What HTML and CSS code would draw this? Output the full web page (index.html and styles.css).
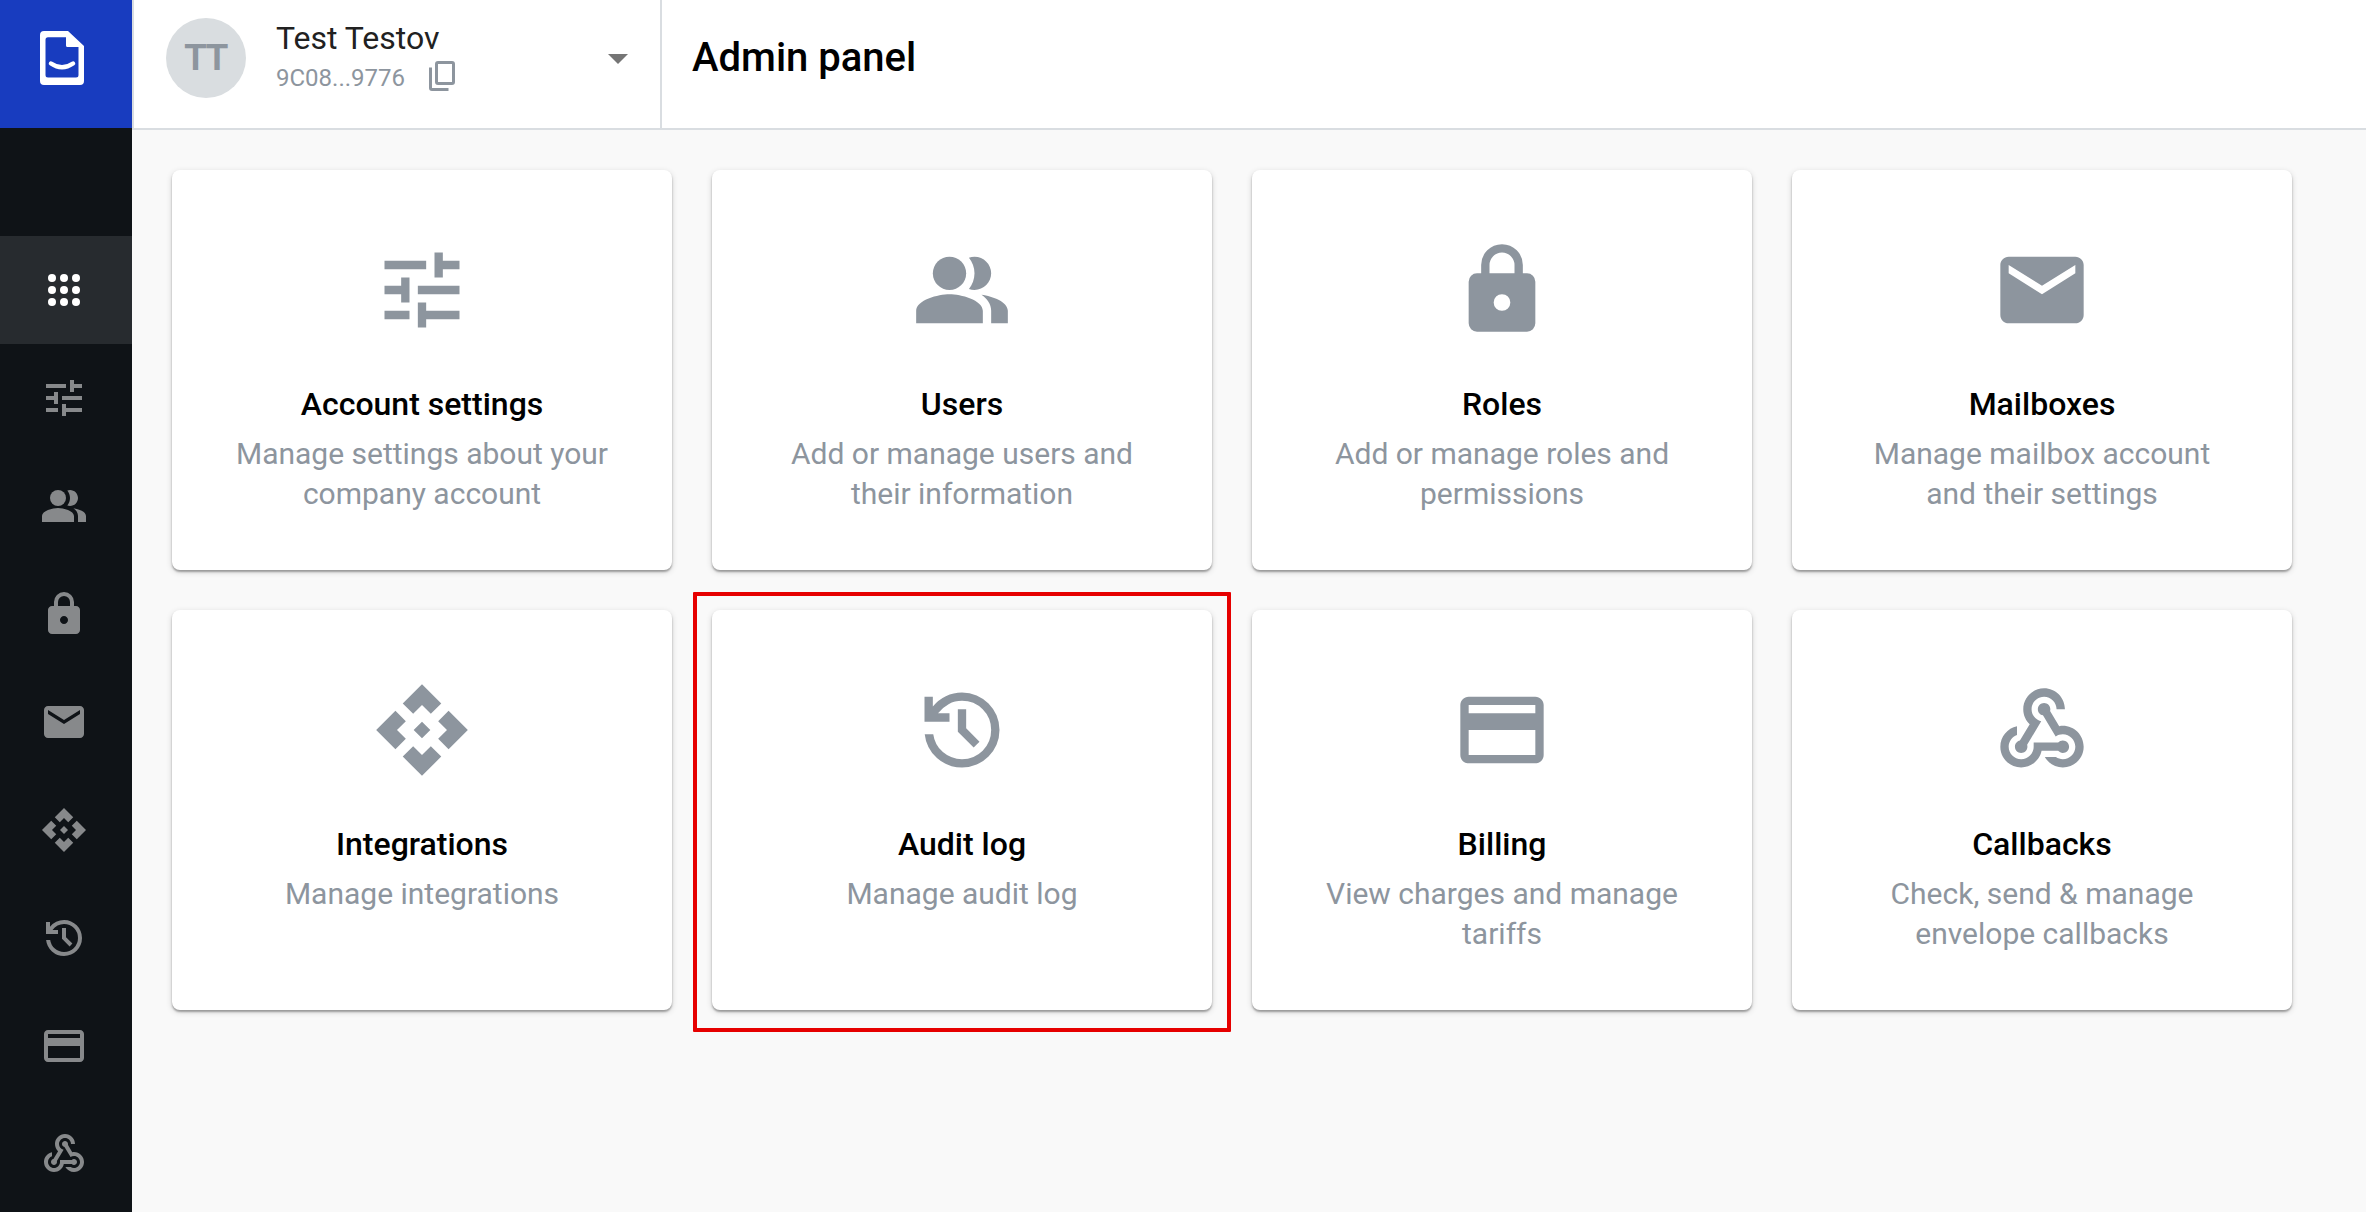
FILE: index.html
```html
<!DOCTYPE html>
<html lang="en">
<head>
<meta charset="utf-8">
<title>Admin panel</title>
<link rel="stylesheet" href="styles.css">
</head>
<body>
<svg class="sprite" xmlns="http://www.w3.org/2000/svg">
  <symbol id="apps" viewBox="0 0 24 24"><circle cx="6" cy="6" r="2"/><circle cx="12" cy="6" r="2"/><circle cx="18" cy="6" r="2"/><circle cx="6" cy="12" r="2"/><circle cx="12" cy="12" r="2"/><circle cx="18" cy="12" r="2"/><circle cx="6" cy="18" r="2"/><circle cx="12" cy="18" r="2"/><circle cx="18" cy="18" r="2"/></symbol>
  <symbol id="tune" viewBox="0 0 24 24"><path d="M3 17v2h6v-2H3zM3 5v2h10V5H3zm10 16v-2h8v-2h-8v-2h-2v6h2zM7 9v2H3v2h4v2h2V9H7zm14 4v-2H11v2h10zm-6-4h2V7h4V5h-4V3h-2v6z"/></symbol>
  <symbol id="people" viewBox="0 0 24 24"><circle cx="9" cy="8" r="4"/><path d="M16.67 13.13C18.04 14.06 19 15.32 19 17v3h4v-3c0-2.18-3.57-3.47-6.33-3.87zM15 12c2.21 0 4-1.79 4-4s-1.79-4-4-4c-.47 0-.91.1-1.33.24C14.5 5.27 15 6.58 15 8s-.5 2.73-1.33 3.76c.42.14.86.24 1.33.24zM9 13c-2.67 0-8 1.34-8 4v3h16v-3c0-2.66-5.33-4-8-4z"/></symbol>
  <symbol id="lock" viewBox="0 0 24 24"><path d="M6 22q-.825 0-1.413-.587T4 20V10q0-.825.588-1.413T6 8h1V6q0-2.075 1.463-3.537T12 1t3.538 1.463T17 6v2h1q.825 0 1.413.588T20 10v10q0 .825-.587 1.413T18 22zm6-5q.825 0 1.413-.587T14 15t-.587-1.412T12 13t-1.412.588T10 15t.588 1.413T12 17M9 8h6V6q0-1.25-.875-2.125T12 3t-2.125.875T9 6z"/></symbol>
  <symbol id="mail" viewBox="0 0 24 24"><path d="M20 4H4c-1.1 0-2 .9-2 2v12c0 1.1.9 2 2 2h16c1.1 0 2-.9 2-2V6c0-1.1-.9-2-2-2zm0 4l-8 5-8-5V6l8 5 8-5v2z"/></symbol>
  <symbol id="api" viewBox="0 0 24 24"><path d="M14 12l-2 2-2-2 2-2 2 2zm-2-6l2.12 2.12 2.5-2.5L12 1 7.38 5.62l2.5 2.5L12 6zm-6 6l2.12-2.12-2.5-2.5L1 12l4.62 4.62 2.5-2.5L6 12zm12 0l-2.12 2.12 2.5 2.5L23 12l-4.62-4.62-2.5 2.5L18 12zm-6 6l-2.12-2.12-2.5 2.5L12 23l4.62-4.62-2.5-2.5L12 18z"/></symbol>
  <symbol id="history" viewBox="0 0 24 24"><path d="M12 21q-3.45 0-6.012-2.287T3.05 13H5.1q.35 2.6 2.313 4.3T12 19q2.925 0 4.963-2.037T19 12t-2.037-4.963T12 5q-1.725 0-3.225.8T6.25 8H9v2H3V4h2v2.35q1.275-1.6 3.113-2.475T12 3q1.875 0 3.513.713t2.85 1.924 1.925 2.85T21 12t-.712 3.513-1.925 2.85-2.85 1.925T12 21m2.8-4.8L11 12.4V7h2v4.6l3.2 3.2z"/></symbol>
  <symbol id="card" viewBox="0 0 24 24"><path d="M20 4H4c-1.11 0-2 .89-2 2v12c0 1.11.89 2 2 2h16c1.1 0 2-.9 2-2V6c0-1.11-.9-2-2-2zm0 14H4v-6h16zm0-10H4V6h16z"/></symbol>
  <symbol id="webhook" viewBox="0 0 24 24"><path d="M10,15l5.88,0c0.27-0.31,0.67-0.5,1.12-0.5c0.83,0,1.5,0.67,1.5,1.5c0,0.83-0.67,1.5-1.5,1.5c-0.44,0-0.84-0.19-1.12-0.5l-3.98,0c-0.46,2.28-2.48,4-4.9,4c-2.76,0-5-2.24-5-5c0-2.42,1.72-4.44,4-4.9l0,2.07C4.84,13.58,4,14.7,4,16c0,1.65,1.35,3,3,3s3-1.35,3-3V15z M12.5,4c1.65,0,3,1.35,3,3h2c0-2.76-2.24-5-5-5l0,0c-2.76,0-5,2.24-5,5c0,1.43,0.6,2.71,1.55,3.62l-2.35,3.9C6.02,14.66,5.5,15.27,5.5,16c0,0.83,0.67,1.5,1.5,1.5s1.5-0.67,1.5-1.5c0-0.16-0.02-0.31-0.07-0.45l3.38-5.63C10.49,9.61,9.5,8.42,9.5,7C9.5,5.35,10.85,4,12.5,4z M17,13c-0.64,0-1.23,0.2-1.72,0.54l-3.05-5.07C11.53,8.35,11,7.74,11,7c0-0.83,0.67-1.5,1.5-1.5S14,6.17,14,7c0,0.15-0.02,0.29-0.06,0.43l2.19,3.65C16.41,11.03,16.7,11,17,11l0,0c2.76,0,5,2.24,5,5c0,2.76-2.24,5-5,5c-1.85,0-3.47-1.01-4.33-2.5l2.67,0C15.82,18.82,16.39,19,17,19c1.65,0,3-1.35,3-3S18.65,13,17,13z"/></symbol>
</svg>
<div class="app">
  <aside class="sidebar">
    <a class="logo"><svg viewBox="0 0 44 54"><path fill-rule="evenodd" d="M4 0H28L44 15V50a4 4 0 0 1-4 4H4a4 4 0 0 1-4-4V4a4 4 0 0 1 4-4zM8 6.3a2.5 2.5 0 0 0-2.5 2.5V44a2.5 2.5 0 0 0 2.5 2.5H36a2.5 2.5 0 0 0 2.5-2.5V16H27.5a1.5 1.5 0 0 1-1.5-1.500V6.300z"/><path class="smile" d="M11 32.500q11 7.500 22 0"/></svg></a>
    <nav class="nav">
      <a class="nav-item active"><svg><use href="#apps"/></svg></a>
      <a class="nav-item"><svg><use href="#tune"/></svg></a>
      <a class="nav-item"><svg><use href="#people"/></svg></a>
      <a class="nav-item"><svg><use href="#lock"/></svg></a>
      <a class="nav-item"><svg><use href="#mail"/></svg></a>
      <a class="nav-item"><svg><use href="#api"/></svg></a>
      <a class="nav-item"><svg><use href="#history"/></svg></a>
      <a class="nav-item"><svg><use href="#card"/></svg></a>
      <a class="nav-item"><svg><use href="#webhook"/></svg></a>
    </nav>
  </aside>
  <div class="content">
    <header class="header">
      <div class="account">
        <div class="avatar">TT</div>
        <div class="who">
          <div class="name">Test Testov</div>
          <div class="id"><span>9C08...9776</span><svg class="copy" viewBox="0 0 26 30"><rect x="7.5" y="1.5" width="17" height="21" rx="1.5"/><path d="M1.5 6.5V27a1.5 1.5 0 0 0 1.5 1.5H19.5"/></svg></div>
        </div>
        <svg class="caret" viewBox="0 0 20 10"><path d="M0 0H20L10 10z"/></svg>
      </div>
      <h1 class="title">Admin panel</h1>
    </header>
    <main class="grid">
      <section class="card"><svg><use href="#tune"/></svg><h2>Account settings</h2><p>Manage settings about your company account</p></section>
      <section class="card"><svg><use href="#people"/></svg><h2>Users</h2><p>Add or manage users and their information</p></section>
      <section class="card"><svg><use href="#lock"/></svg><h2>Roles</h2><p>Add or manage roles and permissions</p></section>
      <section class="card"><svg><use href="#mail"/></svg><h2>Mailboxes</h2><p>Manage mailbox account and their settings</p></section>
      <section class="card"><svg><use href="#api"/></svg><h2>Integrations</h2><p>Manage integrations</p></section>
      <section class="card marked"><svg><use href="#history"/></svg><h2>Audit log</h2><p>Manage audit log</p></section>
      <section class="card"><svg><use href="#card"/></svg><h2>Billing</h2><p>View charges and manage tariffs</p></section>
      <section class="card"><svg><use href="#webhook"/></svg><h2>Callbacks</h2><p>Check, send &amp; manage envelope callbacks</p></section>
    </main>
  </div>
</div>
</body>
</html>
```
FILE: styles.css
```css
* { box-sizing: border-box; margin: 0; padding: 0; }
body { font-family: Roboto, sans-serif; background: #f9f9f9; overflow: hidden; }
.sprite { display: none; }
.app { display: flex; height: 1212px; }
.sidebar { width: 132px; flex: none; background: #0f1317; overflow: hidden; }
.logo { display: flex; height: 128px; padding: 31px 0 0 40px; background: #183cbf; }
.logo svg { width: 44px; height: 54px; fill: #fff; }
.logo .smile { fill: none; stroke: #fff; stroke-width: 4.5; stroke-linecap: round; }
.nav { padding-top: 108px; }
.nav-item { display: flex; align-items: center; height: 108px; padding-left: 40px; }
.nav-item svg { width: 48px; height: 48px; fill: #87898b; }
.nav-item.active { background: #272b2f; }
.nav-item.active svg { fill: #fff; }
.content { flex: 1; }
.header { display: flex; height: 130px; background: #fff; border-bottom: 2px solid #d9dde1; }
.account { display: flex; width: 530px; padding: 18px 32px 0 32px; border-left: 2px solid #d9dde1; border-right: 2px solid #d9dde1; }
.avatar { width: 80px; height: 80px; border-radius: 50%; background: #d9dde0; color: #8d959e; font-family: "Liberation Sans", sans-serif; font-size: 36px; font-weight: 700; letter-spacing: -0.5px; line-height: 80px; text-align: center; }
.who { flex: 1; padding-left: 30px; }
.name { font-size: 32px; line-height: 40px; color: #212121; }
.id { display: flex; align-items: center; gap: 24px; height: 36px; font-size: 24px; color: #8d959e; }
.id span { padding-top: 3px; }
.copy { width: 26px; height: 30px; fill: none; stroke: #8d959e; stroke-width: 3; }
.caret { width: 20px; height: 10px; margin-top: 36px; fill: #757575; }
.title { padding: 34px 0 0 30px; font-size: 40px; line-height: 47px; font-weight: 500; color: #000; }
.grid { display: grid; grid-template-columns: repeat(4, 500px); grid-auto-rows: 400px; gap: 40px; padding: 40px; }
.card { position: relative; display: flex; flex-direction: column; align-items: center; padding: 70px 60px 0; border-radius: 8px; background: #fff; box-shadow: 0 2px 2px rgba(0, 0, 0, .3), 0 2px 6px rgba(0, 0, 0, .16); text-align: center; }
.card svg { width: 100px; height: 100px; fill: #8d959e; }
.card h2 { margin-top: 44px; font-size: 32px; line-height: 40px; font-weight: 500; color: #000; }
.card p { margin-top: 10px; font-size: 30px; line-height: 40px; color: #8d959e; }
.marked::after { content: ""; position: absolute; inset: -18px -19px -22px -19px; border: 4px solid #e60000; border-radius: 1px; }
```
